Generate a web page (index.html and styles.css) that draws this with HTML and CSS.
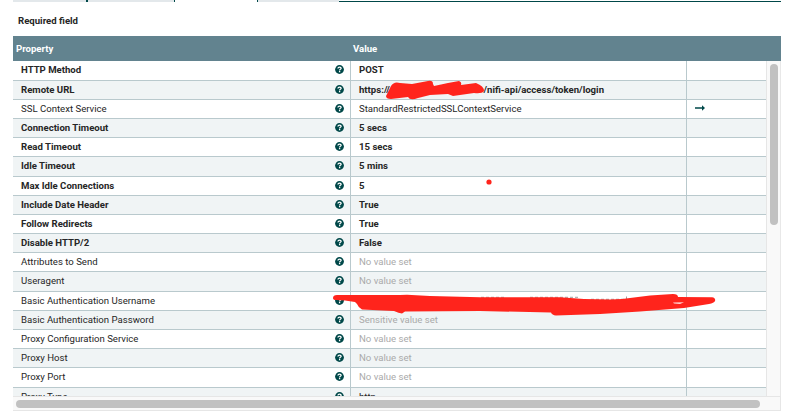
FILE: index.html
```
<!DOCTYPE html>
<html lang="en">
<head>
    <meta charset="UTF-8">
    <meta name="viewport" content="width=device-width, initial-scale=1.0">
    <title>Configure Processor</title>
    <link rel="stylesheet" href="styles.css">
</head>
<body>
    <svg class="symbols" width="0" height="0">
        <symbol id="help" viewBox="0 0 18 18">
            <circle cx="9" cy="9" r="8.8" fill="#004849"/>
            <path d="M5.800 6.900C6 4.800 7.300 4 9 4c1.900 0 3.300 1 3.300 2.700C12.300 8.700 9.200 8.600 9.200 10.800" fill="none" stroke="#fff" stroke-width="2.500"/>
            <rect x="7.900" y="12" width="2.600" height="2.500" fill="#fff"/>
        </symbol>
    </svg>

    <div class="dialog">
        <div class="tabs">
            <div class="tab first"></div>
            <div class="tab second"></div>
            <div class="tab selected"></div>
            <div class="tab last"></div>
            <div class="tab-line"></div>
        </div>
        <div class="required-label">Required field</div>

        <div class="grid">
            <div class="header">
                <div class="header-name">Property</div>
                <div class="header-value">Value</div>
            </div>
            <div class="scroll-area">
                <div class="viewport">
                    <div class="row required"><div class="name"><span>HTTP Method</span><svg class="help"><use href="#help"/></svg></div><div class="value">POST</div><div class="action"></div></div>
                    <div class="row required"><div class="name"><span>Remote URL</span><svg class="help"><use href="#help"/></svg></div><div class="value"><span class="host">https://</span>/nifi-api/access/token/login</div><div class="action"></div></div>
                    <div class="row"><div class="name"><span>SSL Context Service</span><svg class="help"><use href="#help"/></svg></div><div class="value">StandardRestrictedSSLContextService</div><div class="action"><svg class="arrow" viewBox="0 0 10 6"><path d="M0 2.300h7V.3L10 3 7 5.700v-2H0z" fill="#004849"/></svg></div></div>
                    <div class="row required"><div class="name"><span>Connection Timeout</span><svg class="help"><use href="#help"/></svg></div><div class="value">5 secs</div><div class="action"></div></div>
                    <div class="row required"><div class="name"><span>Read Timeout</span><svg class="help"><use href="#help"/></svg></div><div class="value">15 secs</div><div class="action"></div></div>
                    <div class="row required"><div class="name"><span>Idle Timeout</span><svg class="help"><use href="#help"/></svg></div><div class="value">5 mins</div><div class="action"></div></div>
                    <div class="row required"><div class="name"><span>Max Idle Connections</span><svg class="help"><use href="#help"/></svg></div><div class="value">5</div><div class="action"></div></div>
                    <div class="row required"><div class="name"><span>Include Date Header</span><svg class="help"><use href="#help"/></svg></div><div class="value">True</div><div class="action"></div></div>
                    <div class="row required"><div class="name"><span>Follow Redirects</span><svg class="help"><use href="#help"/></svg></div><div class="value">True</div><div class="action"></div></div>
                    <div class="row required"><div class="name"><span>Disable HTTP/2</span><svg class="help"><use href="#help"/></svg></div><div class="value">False</div><div class="action"></div></div>
                    <div class="row"><div class="name"><span>Attributes to Send</span><svg class="help"><use href="#help"/></svg></div><div class="value unset">No value set</div><div class="action"></div></div>
                    <div class="row"><div class="name"><span>Useragent</span><svg class="help"><use href="#help"/></svg></div><div class="value unset">No value set</div><div class="action"></div></div>
                    <div class="row"><div class="name"><span>Basic Authentication Username</span><svg class="help"><use href="#help"/></svg></div><div class="value"></div><div class="action"></div></div>
                    <div class="row"><div class="name"><span>Basic Authentication Password</span><svg class="help"><use href="#help"/></svg></div><div class="value unset">Sensitive value set</div><div class="action"></div></div>
                    <div class="row"><div class="name"><span>Proxy Configuration Service</span><svg class="help"><use href="#help"/></svg></div><div class="value unset">No value set</div><div class="action"></div></div>
                    <div class="row"><div class="name"><span>Proxy Host</span><svg class="help"><use href="#help"/></svg></div><div class="value unset">No value set</div><div class="action"></div></div>
                    <div class="row"><div class="name"><span>Proxy Port</span><svg class="help"><use href="#help"/></svg></div><div class="value unset">No value set</div><div class="action"></div></div>
                    <div class="row"><div class="name"><span>Proxy Type</span><svg class="help"><use href="#help"/></svg></div><div class="value">http</div><div class="action"></div></div>
                </div>
                <div class="scroll-y"><div class="thumb-y"></div></div>
                <div class="scroll-x"><div class="thumb-x"></div></div>
            </div>
        </div>
    </div>

    <!-- red marker over the private values -->
    <svg class="marker" viewBox="0 0 792 419">
        <path class="specks" d="M481 297.300H506M530 297.300H578M591 299.300H626M626.500 296.500V300"/>
        <path d="M386 96L391 86Q394 81 400 83L412 84 428 81Q433 80 433 84L434 86 448 83 459 81Q462 82 461 85L476 83Q484 86 484 91 482 94 474 93L453 96 448 94 430 95 418 98Q410 101 408 97L391 99Q386 99 386 96Z"/>
        <path d="M333 298Q333 295 337 295L400 295 407 294.700 430 296 480 297.200 560 297.200 584 299 610 299.500 622 299 650 295.500 673 294Q678 294 678 297L712 297.300Q716 298 715 301 714 303 709 304L684 308 640 311.500 600 314 556 315.500Q552 315 551 312.500L480 311 405 311.500 402 313.500Q399 313 394 311L362 309.500Q358 307 357 304L355 302 345 300.500 336 300Q333 300 333 298Z"/>
        <path d="M673 302.500L684 302.200 680 304 674 303.500Z" class="gap"/>
        <circle cx="489" cy="182" r="2.600"/>
    </svg>
</body>
</html>
```
FILE: styles.css
```
body {
    margin: 0;
    background: #fff;
    font-family: Roboto, sans-serif;
    font-size: 9.6px;
    color: #262626;
    overflow: hidden;
}
.symbols {
    display: block;
}
.dialog {
    width: 768px;
    margin-left: 13px;
}
.tabs {
    display: flex;
    height: 2px;
}
.tab {
    box-sizing: border-box;
    background: #e3e8eb;
}
.tab.first {
    width: 75px;
    border-right: 2px solid #004849;
}
.tab.second {
    width: 86px;
}
.tab.selected {
    width: 84px;
    background: #fff;
    border-left: 1px solid #004849;
    border-right: 1px solid #004849;
}
.tab.last {
    width: 81px;
}
.tab-line {
    flex: 1;
    box-sizing: border-box;
    border-bottom: 1px solid #004849;
}
.required-label {
    height: 34px;
    padding: 12px 0 0 5px;
    box-sizing: border-box;
    line-height: 14px;
    font-weight: 700;
}
.header {
    display: flex;
    height: 25px;
    line-height: 25px;
    background: #62838f;
    color: #fff;
    font-weight: 700;
}
.header-name {
    width: 337px;
    padding-left: 3px;
}
.scroll-area {
    display: grid;
    grid-template-columns: 753px 15px;
    grid-template-rows: 335px 15px;
}
.viewport {
    padding-top: 0.4px;
    overflow: hidden;
}
.row {
    display: flex;
    box-sizing: border-box;
    height: 19.2px;
    line-height: 18.4px;
    border-bottom: 1px solid #b9c9cd;
}
.row:nth-child(even) {
    background: #f0f4f5;
}
.row.required {
    font-weight: 700;
}
.name,
.value {
    display: flex;
    box-sizing: border-box;
    padding-left: 8px;
    border-right: 1px solid #b9c9cd;
}
.name {
    width: 338px;
    justify-content: space-between;
    padding-right: 6.5px;
}
.value {
    width: 336px;
}
.unset {
    color: #aaa;
}
.host {
    width: 124.5px;
}
.help {
    width: 9px;
    height: 9px;
    margin-top: 4px;
}
.arrow {
    display: block;
    width: 10px;
    height: 6px;
    margin: 5.5px 0 0 8px;
}
.scroll-y {
    box-sizing: border-box;
    padding: 3px 3px 0;
    background: #f9f9f9;
    border-left: 1px solid #e6e6e6;
    border-right: 1px solid #e8e8e8;
}
.thumb-y {
    height: 161px;
    width: 8px;
    border-radius: 4px;
    background: #c1c1c1;
}
.scroll-x {
    grid-column: 1 / 3;
    box-sizing: border-box;
    padding: 3px;
    background: #f9f9f9;
    border: 1px solid #e6e6e6;
    border-left: 0;
}
.thumb-x {
    width: 744px;
    height: 8px;
    border-radius: 4px;
    background: #c1c1c1;
}
.marker {
    position: absolute;
    top: 0;
    left: 0;
    width: 792px;
    height: 419px;
    fill: #ff241c;
}
.marker .gap {
    fill: #ffd5d2;
}
.marker .specks {
    fill: none;
    stroke: #777;
    stroke-width: 0.7;
    stroke-dasharray: 3 2;
}
```
